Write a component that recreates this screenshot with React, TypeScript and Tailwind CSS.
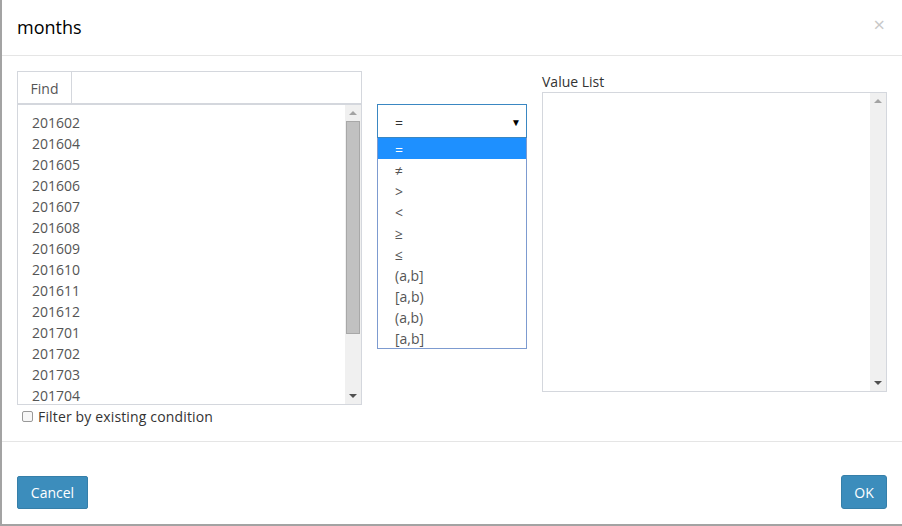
import React from "react";

const months = [
  "201602", "201604", "201605", "201606", "201607", "201608", "201609",
  "201610", "201611", "201612", "201701", "201702", "201703", "201704",
];

const ops = ["=", "≠", ">", "<", "≥", "≤", "(a,b]", "[a,b)", "(a,b)", "[a,b]"];

const ScrollBar: React.FC<{ thumb?: boolean }> = ({ thumb }) => (
  <div className="w-[16px] h-full bg-[#f0f0f0] flex flex-col items-center shrink-0">
    <div className="h-[16px] flex items-center justify-center">
      <div className="w-0 h-0 border-l-[4px] border-r-[4px] border-b-[4px] border-l-transparent border-r-transparent border-b-[#a3a3a3]" />
    </div>
    <div className="flex-1 w-full px-[1px]">
      {thumb && <div className="w-full h-[213px] bg-[#c1c1c1] border border-[#a8a8a8]" />}
    </div>
    <div className="h-[16px] flex items-center justify-center">
      <div className="w-0 h-0 border-l-[4px] border-r-[4px] border-t-[4px] border-l-transparent border-r-transparent border-t-[#505050]" />
    </div>
  </div>
);

export default function App() {
  return (
    <div
      className="w-[902px] h-[526px] bg-white border-l-2 border-b-2 border-[#a3a3a3] flex flex-col text-[14px] text-[#333]"
      style={{ fontFamily: '"Open Sans", "Noto Sans", sans-serif' }}
    >
      {/* header */}
      <div className="h-[56px] border-b border-[#e5e5e5] flex items-center justify-between pl-[15px] pr-[17px] shrink-0">
        <h1 className="text-[18px] text-black leading-none pb-[2px]">months</h1>
        <span className="text-[20px] text-[#c8c8c8] leading-none pb-[6px]">×</span>
      </div>

      {/* body */}
      <div className="h-[386px] border-b border-[#e5e5e5] flex pl-[15px] pt-[15px] gap-[15px] shrink-0">
        {/* left */}
        <div className="w-[345px] flex flex-col">
          <div className="h-[334px] border border-[#d4d7dd] flex flex-col">
            <div className="h-[33px] border-b-2 border-[#d4d7dd] flex shrink-0">
              <div className="w-[54px] border-r border-[#d4d7dd] flex items-center justify-center text-[#555] pt-[2px]">Find</div>
              <div className="flex-1" />
            </div>
            <div className="flex-1 flex overflow-hidden">
              <div className="flex-1 pt-[7px] pl-[14px] overflow-hidden">
                {months.map((m) => (
                  <div key={m} className="h-[21px] leading-[21px] text-[#555]">{m}</div>
                ))}
              </div>
              <ScrollBar thumb />
            </div>
          </div>
          <div className="flex items-center h-[23px] pl-[5px] gap-[5px]">
            <div className="w-[11px] h-[11px] border border-[#999] rounded-[2px] bg-[#f7f7f7]" />
            <span className="tracking-[0.15px]">Filter by existing condition</span>
          </div>
        </div>

        {/* operator dropdown */}
        <div className="w-[150px] pt-[33px]">
          <div className="h-[34px] border border-[#3a87c2] flex items-center justify-between pl-[17px] pr-[5px] pt-[2px]">
            <span className="text-[#333]">=</span>
            <span className="text-[10px] text-black">▼</span>
          </div>
          <div className="border border-[#7d9bd0] border-t-0">
            {ops.map((o, i) => (
              <div
                key={o}
                className={
                  i === 0
                    ? "h-[21px] leading-[23px] pl-[17px] bg-[#1e90ff] text-white"
                    : "h-[21px] leading-[23px] pl-[17px] text-[#555]"
                }
              >
                {o}
              </div>
            ))}
          </div>
        </div>

        {/* value list */}
        <div className="w-[345px] flex flex-col">
          <div className="h-[20px] leading-[20px] mt-[1px]">Value List</div>
          <div className="h-[300px] border border-[#d4d7dd] flex justify-end">
            <ScrollBar />
          </div>
        </div>
      </div>

      {/* footer */}
      <div className="flex-1 flex items-start justify-between pl-[15px] pr-[15px] pt-[34px]">
        <button className="h-[33px] w-[71px] bg-[#3c8dbc] border border-[#367fa9] rounded-[2px] text-white">Cancel</button>
        <button className="h-[34px] w-[46px] bg-[#3c8dbc] border border-[#367fa9] rounded-[3px] text-white mt-[-1px]">OK</button>
      </div>
    </div>
  );
}
